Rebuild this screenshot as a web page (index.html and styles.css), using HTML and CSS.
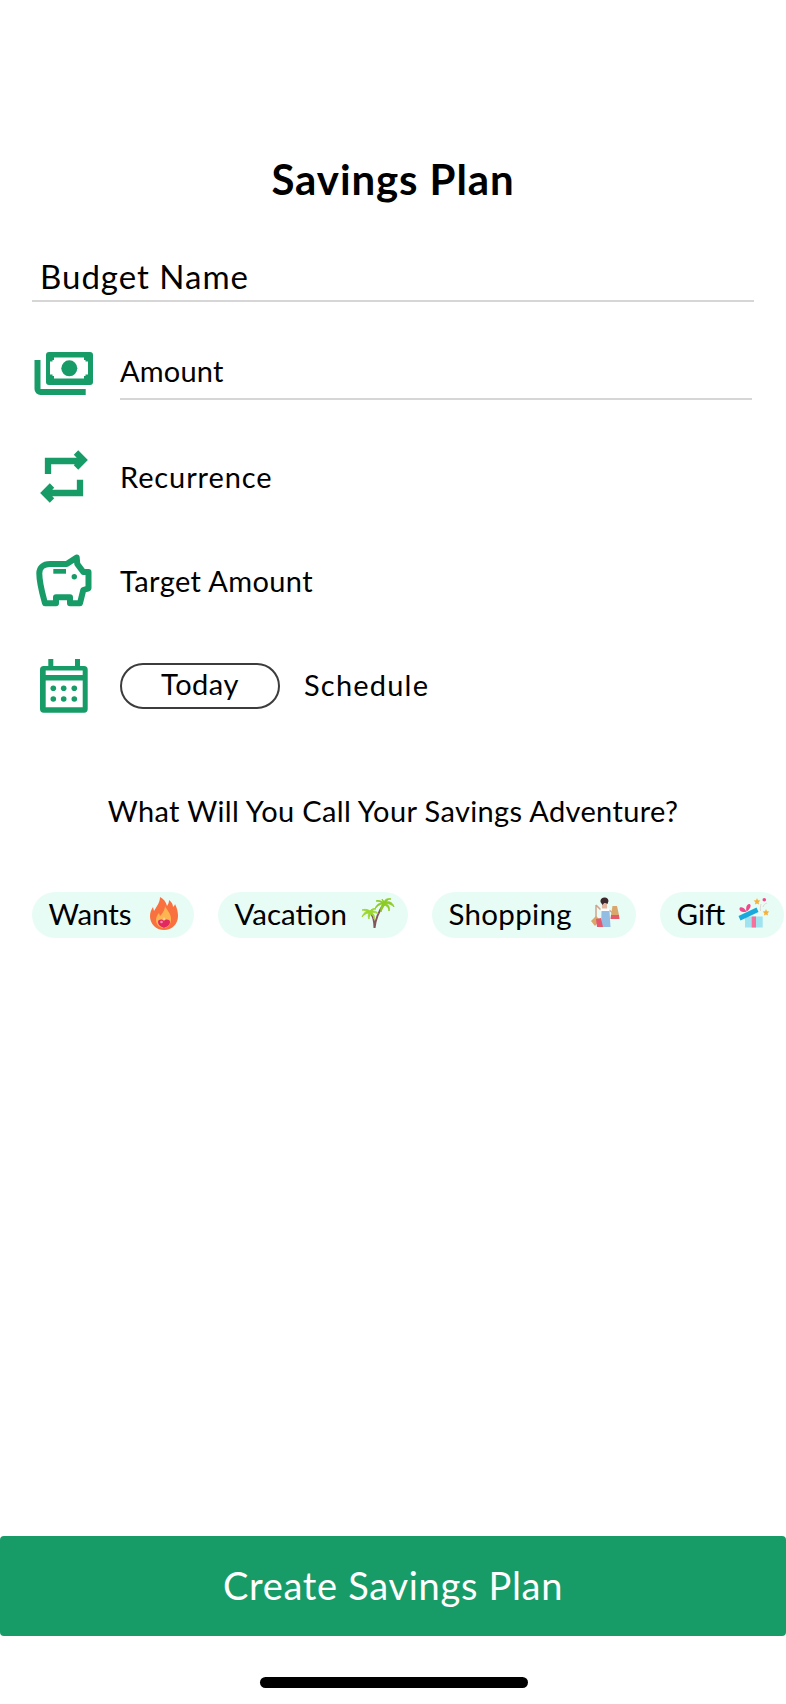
FILE: index.html
```html
<!DOCTYPE html>
<html lang="en">
<head>
    <meta charset="UTF-8">
    <meta name="viewport" content="width=device-width, initial-scale=1.0">
    <title>Savings Plan</title>
    <link rel="stylesheet" href="styles.css">
</head>
<body>
    <div class="screen">
        <h1 class="title">Savings Plan</h1>
        <div class="name-field">Budget Name</div>

        <div class="row row-amount">
            <svg class="icon" viewBox="0 0 64 64">
                <rect fill="#179c68" x="14" y="11" width="47" height="33" rx="3"/>
                <path fill="#fff" d="M22 16.500h30V19h1.500v1.500H56v13h-2.500V35H52v2.500H22V35h-1.500v-1.500H18v-13h2.500V19H22z"/>
                <circle fill="#179c68" cx="37.300" cy="27.300" r="8"/>
                <path fill="none" stroke="#179c68" stroke-width="6" d="M5.500 19v29a3 3 0 0 0 3 3h45.200"/>
            </svg>
            <div class="amount-text">Amount</div>
        </div>

        <div class="row row-recurrence">
            <svg class="icon" viewBox="0 -1 64 64">
                <path fill="none" stroke="#179c68" stroke-width="6.300" d="M16 29V16h35M44 7.600L51.400 15 44 22.400M48 34.700V48H13M20 40.600L12.600 48 20 55.400"/>
            </svg>
            <div class="row-text">Recurrence</div>
        </div>

        <div class="row row-target">
            <svg class="icon" viewBox="0 -1 64 64">
                <path fill="none" stroke="#179c68" stroke-width="6" stroke-linejoin="round" d="M44.700 8.500l-10 6.500H18C11 15 7.300 19 7.300 24.300c0 10 3 20 5.700 30H24v-6h14v6h10l3.300-13.300 5.200-1.700V23h-5.200l-6-8z"/>
                <path fill="#179c68" d="M21.300 20H34v4.700H21.300z"/>
                <circle fill="#179c68" cx="42.300" cy="27.700" r="2.700"/>
            </svg>
            <div class="row-text">Target Amount</div>
        </div>

        <div class="row row-date">
            <svg class="icon" viewBox="0 0 64 64">
                <path fill="#179c68" d="M16.300 5h5v7h21.700V5h5v7H52a3.700 3.700 0 0 1 3.700 3.700v39.300a3.700 3.700 0 0 1-3.700 3.700H11.700A3.700 3.700 0 0 1 8 55V15.700A3.700 3.700 0 0 1 11.700 12h4.600z"/>
                <path fill="#fff" d="M13.700 16.500h37v4.500h-37zM13.700 26.500h37v26.700h-37z"/>
                <g fill="#179c68">
                    <circle cx="21.300" cy="34.300" r="2.800"/><circle cx="31.700" cy="34.300" r="2.800"/><circle cx="42.300" cy="34.300" r="2.800"/>
                    <circle cx="21.300" cy="45" r="2.800"/><circle cx="31.700" cy="45" r="2.800"/><circle cx="42.300" cy="45" r="2.800"/>
                </g>
            </svg>
            <div class="today-pill">Today</div>
            <div class="schedule">Schedule</div>
        </div>

        <h2 class="question">What Will You Call Your Savings Adventure?</h2>

        <div class="chips">
            <div class="chip chip-wants">Wants
                <svg class="emoji" viewBox="0 0 34 34">
                    <path fill="#f9713f" d="M13 1c4 2 6 5 7 9 1-2 2-3 2-6 3 2 4 5 4 7 1-1 2-2 2-3 2 4 3 8 3 12 0 8-6 14-14 14S3 28 3 20c0-3 1-6 3-9l1 4c1-2 2-3 3-5 2-3 3-6 3-9z"/>
                    <path fill="#fdb552" d="M18 10c1 3 6 7 6 13 0 5-3 9-7 9s-8-3-8-8c0-3 2-6 3-7l1 3c2-2 5-6 5-10z"/>
                    <path fill="#fcd58b" d="M17 21c1 2 3 3 3 6s-1 5-3 5-4-2-4-5 3-3 4-6z"/>
                    <path fill="#e2285f" d="M17 32c-3-1-6-3-6-6 0-3 5-3 6-1 1-2 6-2 6 1 0 3-3 5-6 6z"/>
                    <circle fill="#fa8eb0" cx="14.500" cy="26" r="1.300"/>
                </svg>
            </div>
            <div class="chip chip-vacation">Vacation
                <svg class="emoji" viewBox="0 0 34 34">
                    <path fill="none" stroke="#83565a" stroke-width="2" d="M13.500 32c1-9 5-18 10-25M13.500 32c0-6-1-12-5-17"/>
                    <path fill="#8bcb22" stroke="#8bcb22" stroke-width="0.900" d="M23 7c-2-2-5-3-8-2 3 0 5 1 6 2-3 0-6 2-7 6 2-3 5-5 8-5-2 2-3 5-2 8 1-3 2-5 4-7 2 1 4 3 4 6 1-3 0-6-3-7 3-1 6 1 8 3-1-4-4-6-8-5 1-2 3-3 5-3-3-1-6 0-7 3 0-1-1-2-2-3 0 1 1 3 2 4z"/>
                    <path fill="#9bd72f" stroke="#9bd72f" stroke-width="0.900" d="M8 15c-2-2-5-2-7-1 2 0 4 1 5 1-2 1-4 3-5 6 2-2 4-4 7-4-1 2-1 4 0 6 0-2 1-4 2-5 2 1 3 3 3 5 1-3 0-5-2-6 2-1 5 0 6 1-1-3-4-3-6-3 1-1 2-2 4-2-2-1-5 0-6 2-1-1-2-1-3-1z"/>
                </svg>
            </div>
            <div class="chip chip-shopping">Shopping
                <svg class="emoji" viewBox="0 0 34 34">
                    <path fill="none" stroke="#d0a48e" stroke-width="1.500" d="M12 14L7 9M7 9v13M20 14l4 3"/>
                    <path fill="#e4b6a0" d="M13 8h5v5h-5z"/>
                    <path fill="#3c2a2e" d="M11.500 6a4 4 0 0 1 8-1l-1 3c-2-1-4-1-5 1z"/>
                    <path fill="#fff" d="M11.500 12.500h9v3h-9z"/>
                    <path fill="#94bde4" d="M12.500 15h8l1 16h-9.500z"/>
                    <path fill="#d9a66c" d="M23.500 10h4.500l2 9h-8z"/>
                    <path fill="#e45a6c" d="M22 19h8l.5 4h-9z"/>
                    <path fill="#d9a66c" d="M2 25l5-5 4 4-5 6z"/>
                    <path fill="#e45a6c" d="M7 23l5-1 2 9H8z"/>
                </svg>
            </div>
            <div class="chip chip-gift">Gift
                <svg class="emoji" viewBox="0 0 34 34">
                    <path fill="#9fe3f0" d="M8 20.500h17.700v11H8z"/>
                    <path fill="#f7709b" d="M14.700 20.500H19v11h-4.300z"/>
                    <path fill="#19a9dc" d="M1.500 20l18-8.500 2 4.500-18 8.500z"/>
                    <path fill="#f0488c" d="M9.500 15.500C6 17 2 15 2.500 12.500c.5-2.500 5-1 7 3zM9.500 15.500c-1-4 .5-8 3-7.500 2.500 1 .5 5.500-3 7.500z"/>
                    <path fill="#f6b13c" d="M20 2l1 2.300 2.400.3-1.800 1.600.5 2.400-2.100-1.200-2.100 1.200.5-2.400-1.800-1.600 2.400-.3zM29 13l1 2.300 2.400.3-1.800 1.600.5 2.400-2.100-1.200-2.100 1.200.5-2.400-1.800-1.600 2.400-.3z"/>
                    <circle fill="#f0488c" cx="27.300" cy="3.700" r="1.800"/>
                    <path fill="none" stroke="#ddd8d0" stroke-width="1" d="M23.500 15c-.5-3 0-5 .5-7M26 11c.5-2 2-3.500 4-4"/>
                </svg>
            </div>
        </div>

        <button class="create-btn">Create Savings Plan</button>
        <div class="home-bar"></div>
    </div>
</body>
</html>
```

FILE: styles.css
```css
* {
    box-sizing: border-box;
}

body {
    margin: 0;
    font-family: Lato, "Open Sans", sans-serif;
    color: #000;
    background-color: #fff;
}

.screen {
    width: 786px;
    height: 1704px;
    display: flex;
    flex-direction: column;
    overflow: hidden;
}

.title {
    margin: 153px 0 0 0;
    height: 52px;
    line-height: 52px;
    font-size: 42px;
    font-weight: 700;
    letter-spacing: 0.9px;
    text-align: center;
}

.name-field {
    margin: 50px 32px 0 32px;
    padding-left: 8px;
    height: 47px;
    line-height: 42px;
    font-size: 33px;
    letter-spacing: 1px;
    border-bottom: 2px solid #d6d6d6;
}

.row {
    display: flex;
    align-items: center;
    padding-left: 32px;
}

.icon {
    width: 64px;
    height: 64px;
    flex-shrink: 0;
    margin-right: 24px;
}

.row-amount {
    margin-top: 39px;
}

.amount-text {
    flex: 1;
    margin-right: 34px;
    height: 54px;
    padding-top: 7px;
    line-height: 36px;
    font-size: 29px;
    letter-spacing: 0.2px;
    border-bottom: 2px solid #d6d6d6;
}

.row-text {
    font-size: 29px;
}

.row-recurrence {
    margin-top: 39px;
    letter-spacing: 0.9px;
}

.row-target {
    margin-top: 40px;
    letter-spacing: 0.4px;
}

.row-date {
    margin-top: 42px;
}

.today-pill {
    width: 160px;
    height: 46px;
    line-height: 38px;
    text-align: center;
    font-size: 29px;
    letter-spacing: 0.5px;
    border: 2px solid #3c3c3c;
    border-radius: 23px;
}

.schedule {
    margin-left: 24px;
    padding-bottom: 3px;
    font-size: 29px;
    letter-spacing: 1.2px;
}

.question {
    margin: 73px 0 0 0;
    text-align: center;
    font-size: 29px;
    font-weight: 400;
    letter-spacing: 0.36px;
    line-height: 40px;
}

.chips {
    display: flex;
    gap: 24px;
    margin-top: 61px;
    padding-left: 32px;
}

.chip {
    display: flex;
    align-items: center;
    justify-content: space-between;
    flex-shrink: 0;
    height: 46px;
    padding: 0 13px 4px 16.5px;
    font-size: 29.5px;
    border-radius: 23px;
    background-color: #e8fcf6;
}

.chip-wants {
    width: 162px;
}

.chip-vacation {
    width: 190px;
}

.chip-shopping {
    width: 204px;
    letter-spacing: 0.3px;
}

.chip-gift {
    width: 124px;
}

.emoji {
    width: 34px;
    height: 34px;
}

.create-btn {
    margin-top: auto;
    width: 100%;
    height: 100px;
    border: none;
    border-radius: 4px;
    color: #fff;
    background-color: #179c68;
    font-family: Lato, "Open Sans", sans-serif;
    font-size: 38px;
    letter-spacing: 0.7px;
    padding-bottom: 4px;
}

.home-bar {
    width: 268px;
    height: 11px;
    margin: 41px 0 16px 260px;
    border-radius: 6px;
    background-color: #000;
}
```
